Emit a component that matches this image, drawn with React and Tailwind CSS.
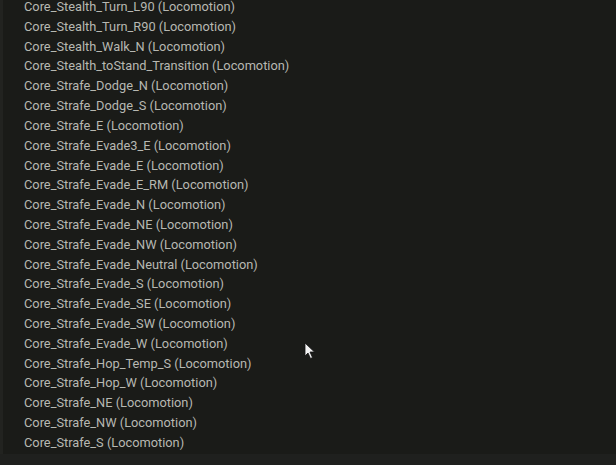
const items = [
  'Core_Stealth_Turn_L90',
  'Core_Stealth_Turn_R90',
  'Core_Stealth_Walk_N',
  'Core_Stealth_toStand_Transition',
  'Core_Strafe_Dodge_N',
  'Core_Strafe_Dodge_S',
  'Core_Strafe_E',
  'Core_Strafe_Evade3_E',
  'Core_Strafe_Evade_E',
  'Core_Strafe_Evade_E_RM',
  'Core_Strafe_Evade_N',
  'Core_Strafe_Evade_NE',
  'Core_Strafe_Evade_NW',
  'Core_Strafe_Evade_Neutral',
  'Core_Strafe_Evade_S',
  'Core_Strafe_Evade_SE',
  'Core_Strafe_Evade_SW',
  'Core_Strafe_Evade_W',
  'Core_Strafe_Hop_Temp_S',
  'Core_Strafe_Hop_W',
  'Core_Strafe_NE',
  'Core_Strafe_NW',
  'Core_Strafe_S',
];

export default function App() {
  return (
    <div className="w-[616px] h-[465px] overflow-hidden bg-[#1a1b18] flex flex-col relative">
      <div className="flex flex-1 min-h-0">
        {/* left edge of the panel */}
        <div className="w-[3px] bg-[#222320]" />
        <ul
          className="flex-1 pl-[21px] -mt-[3px] text-[12.8px] leading-[19.82px] text-[#b7b8b2]"
          style={{ fontFamily: 'Roboto, "Liberation Sans", sans-serif' }}
        >
          {items.map((name) => (
            <li key={name} className="whitespace-nowrap">
              {name} (Locomotion)
            </li>
          ))}
        </ul>
      </div>
      <div className="h-[11px] bg-[#1f201e]" />

      {/* mouse cursor */}
      <svg
        className="absolute left-[304px] top-[342px]"
        width="12"
        height="18"
        viewBox="0 0 12 18"
      >
        <path
          d="M1 1 L1 14 L4 11 L6.5 16.5 L8.5 15.5 L6 10 L10.5 10 Z"
          fill="#f2f2f2"
          stroke="#111"
          strokeWidth="0.8"
        />
      </svg>
    </div>
  );
}
